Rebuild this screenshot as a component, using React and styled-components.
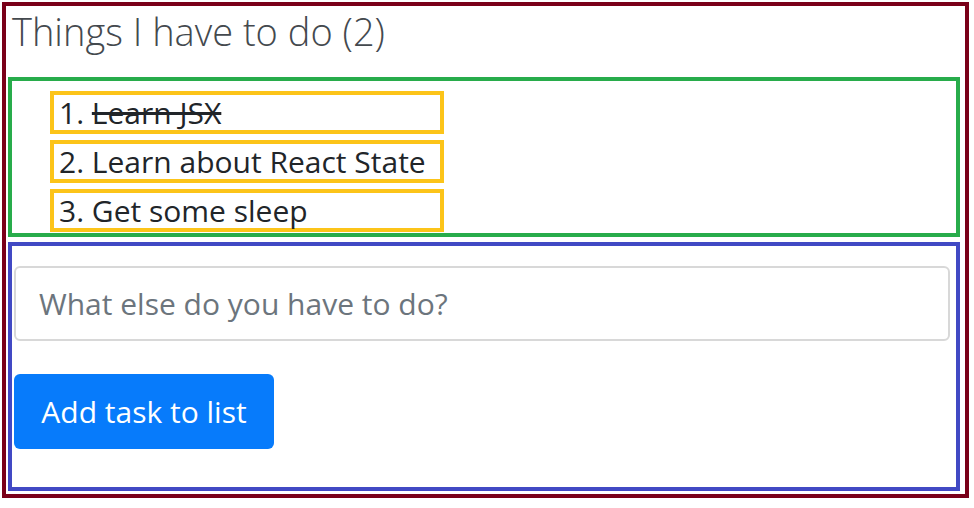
import React from "react";
import styled, { createGlobalStyle } from "styled-components";

const GlobalStyle = createGlobalStyle`
  html, body {
    margin: 0;
    padding: 0;
    background: #ffffff;
  }
  body {
    font-family: "Open Sans", "Noto Sans", Arial, sans-serif;
    color: #212529;
  }
`;

// 전체 컴포넌트 (적갈색 테두리)
const Frame = styled.div`
  box-sizing: border-box;
  width: 967px;
  height: 496px;
  margin: 2px 0 0 2px;
  border: 4px solid #7a0019;
  padding: 0 5px 0 2px;
  display: flex;
  flex-direction: column;
`;

const Title = styled.h1`
  margin: 0;
  height: 71px;
  padding: 3px 0 0 4px;
  box-sizing: border-box;
  font-size: 38px;
  font-weight: 300;
  line-height: 44px;
  color: #44494e;
`;

// 할 일 목록 (초록 테두리)
const TaskList = styled.ol`
  box-sizing: border-box;
  height: 160px;
  margin: 0;
  padding: 10px 0 0 38px;
  border: 4px solid #28ac4b;
  list-style: none;
  display: flex;
  flex-direction: column;
  gap: 6px;
`;

// 각 항목 (노란 테두리)
const TaskItem = styled.li`
  box-sizing: border-box;
  width: 394px;
  height: 43px;
  padding-left: 5px;
  border: 4px solid #fcc419;
  font-size: 30px;
  line-height: 36px;
  color: #212529;
  white-space: nowrap;
`;

const TaskText = styled.span`
  text-decoration: ${(props) => (props.done ? "line-through" : "none")};
`;

// 입력 폼 (파란 테두리)
const TaskForm = styled.form`
  box-sizing: border-box;
  height: 249px;
  margin: 5px 0 0 0;
  padding: 20px 6px 0 2px;
  border: 4px solid #4149c4;
  display: flex;
  flex-direction: column;
  align-items: flex-start;
  gap: 33px;
`;

const TaskInput = styled.input`
  box-sizing: border-box;
  width: 100%;
  height: 75px;
  padding: 0 23px;
  border: 2px solid #d8d8d8;
  border-radius: 6px;
  font-family: "Open Sans", "Noto Sans", Arial, sans-serif;
  font-size: 30px;
  color: #495057;
  outline: none;

  &::placeholder {
    color: #6c757d;
    opacity: 1;
  }
`;

const AddButton = styled.button`
  box-sizing: border-box;
  width: 260px;
  height: 75px;
  border: none;
  border-radius: 6px;
  background-color: #077bfb;
  color: #ffffff;
  font-family: "Open Sans", "Noto Sans", Arial, sans-serif;
  font-size: 30px;
  cursor: pointer;
`;

const tasks = [
  { id: 1, text: "Learn JSX", done: true },
  { id: 2, text: "Learn about React State", done: false },
  { id: 3, text: "Get some sleep", done: false },
];

const App = () => {
  const remaining = tasks.filter((t) => !t.done).length;

  return (
    <>
      <GlobalStyle />
      <Frame>
        <Title>Things I have to do ({remaining})</Title>
        <TaskList>
          {tasks.map((task, i) => (
            <TaskItem key={task.id}>
              {i + 1}. <TaskText done={task.done}>{task.text}</TaskText>
            </TaskItem>
          ))}
        </TaskList>
        <TaskForm onSubmit={(e) => e.preventDefault()}>
          <TaskInput placeholder="What else do you have to do?" />
          <AddButton type="submit">Add task to list</AddButton>
        </TaskForm>
      </Frame>
    </>
  );
};

export default App;
